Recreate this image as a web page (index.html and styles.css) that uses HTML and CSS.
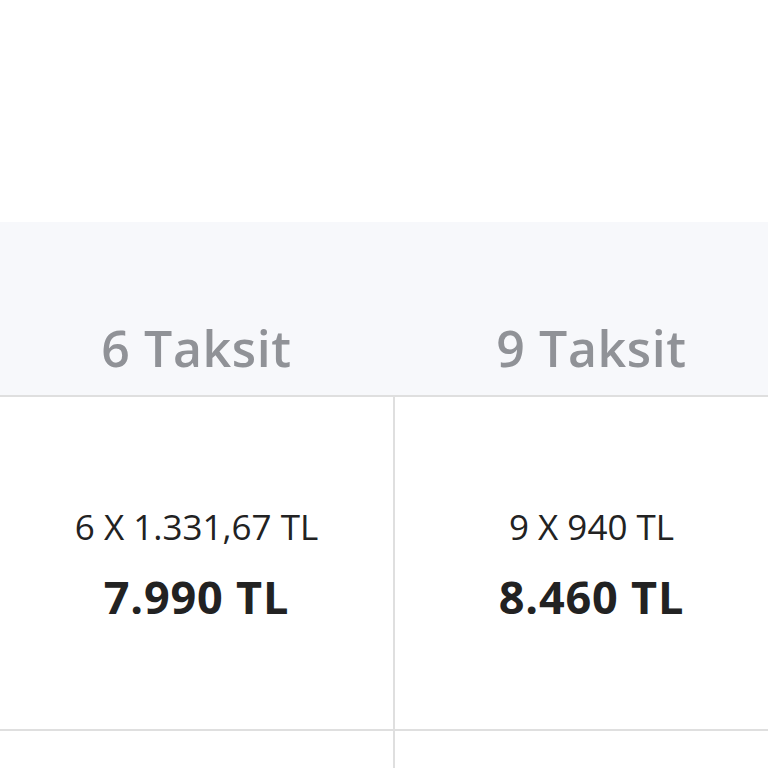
FILE: index.html
```html
<!DOCTYPE html>
<html lang="tr">
<head>
<meta charset="utf-8">
<link rel="stylesheet" href="styles.css">
</head>
<body>
<div class="page">
  <div class="top"></div>
  <div class="table">
    <div class="head">
      <div class="hcell">6 Taksit</div>
      <div class="hcell">9 Taksit</div>
    </div>
    <div class="row">
      <div class="cell"><div class="per">6 X 1.331,67 TL</div><div class="total">7.990 TL</div></div>
      <div class="cell"><div class="per">9 X 940 TL</div><div class="total">8.460 TL</div></div>
    </div>
    <div class="row short">
      <div class="cell"></div>
      <div class="cell"></div>
    </div>
  </div>
</div>
</body>
</html>
```
FILE: styles.css
```css
html, body {
  margin: 0;
  padding: 0;
  background: #fff;
  overflow: hidden;
  width: 768px;
  height: 768px;
}
.page {
  width: 788px;
  font-family: "Open Sans", "Liberation Sans", sans-serif;
}
.top {
  height: 222px;
  background: #fff;
}
.head {
  display: grid;
  grid-template-columns: repeat(2, 393px);
  column-gap: 2px;
  background: #f7f8fb;
  border-bottom: 2px solid #dfdfdf;
  box-sizing: border-box;
  height: 175px;
}
.hcell {
  display: flex;
  align-items: flex-end;
  justify-content: center;
  padding-bottom: 13px;
  font-size: 50px;
  font-weight: 600;
  letter-spacing: 0.6px;
  color: #909297;
}
.row {
  display: grid;
  grid-template-columns: repeat(2, 393px);
  column-gap: 2px;
  background: #dfdfdf;
  border-bottom: 2px solid #dfdfdf;
}
.cell {
  background: #fff;
  height: 332px;
  display: flex;
  flex-direction: column;
  align-items: center;
  justify-content: center;
  gap: 16px;
  color: #222;
}
.short .cell {
  height: 40px;
}
.per {
  font-size: 35px;
  font-weight: 400;
  margin-top: 4px;
}
.total {
  font-size: 45px;
  font-weight: 700;
  letter-spacing: 0.8px;
}
```
